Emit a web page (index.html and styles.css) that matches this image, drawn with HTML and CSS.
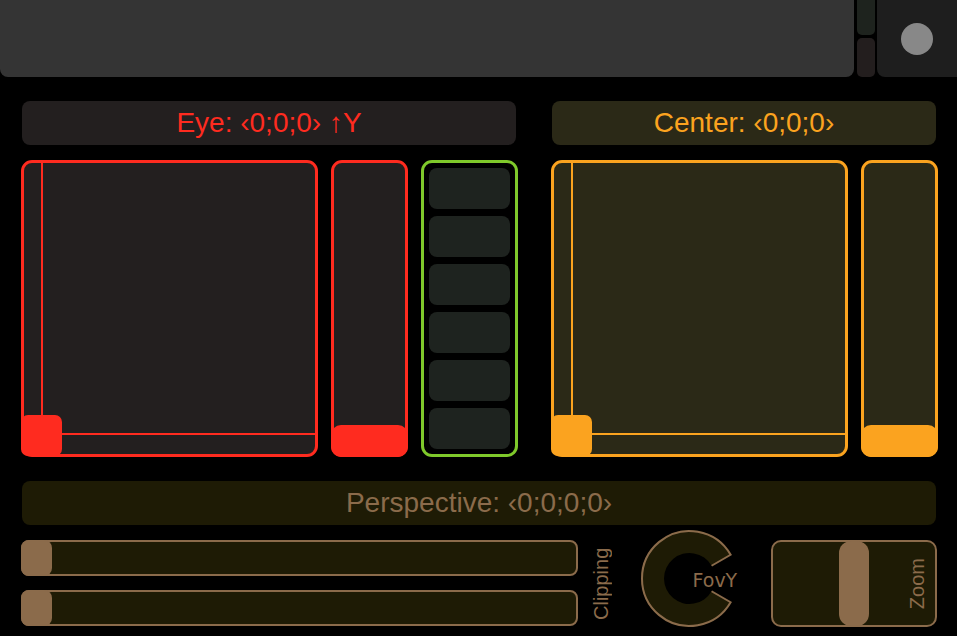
FILE: index.html
```html
<!DOCTYPE html>
<html>
<head>
<meta charset="utf-8">
<link rel="stylesheet" href="styles.css">
</head>
<body>
<div class="top">
  <div class="bar"></div>
  <div class="mini"><div class="mini-a"></div><div class="mini-b"></div></div>
  <div class="rec"><div class="dot"></div></div>
</div>

<div class="panels">
  <section class="section">
    <div class="label eye-label">Eye: ‹0;0;0› ↑Y</div>
    <div class="row">
      <div class="pad eye-pad">
        <div class="vline"></div>
        <div class="hline"></div>
        <div class="handle"></div>
      </div>
      <div class="zs eye-zs"><div class="zhandle"></div></div>
      <div class="btns">
        <div class="btn"></div>
        <div class="btn"></div>
        <div class="btn"></div>
        <div class="btn"></div>
        <div class="btn"></div>
        <div class="btn"></div>
      </div>
    </div>
  </section>
  <section class="section">
    <div class="label center-label">Center: ‹0;0;0›</div>
    <div class="row">
      <div class="pad center-pad">
        <div class="vline"></div>
        <div class="hline"></div>
        <div class="handle"></div>
      </div>
      <div class="zs center-zs"><div class="zhandle"></div></div>
    </div>
  </section>
</div>

<div class="persp">Perspective: ‹0;0;0;0›</div>

<div class="bottom">
  <div class="sliders">
    <div class="hs"><div class="hh"></div></div>
    <div class="hs"><div class="hh"></div></div>
  </div>
  <div class="clip">Clipping</div>
  <svg class="knob" width="100" height="87" viewBox="0 0 100 87">
    <path d="M90.5 14.25 A48.5 48.5 0 1 0 90.5 62.75 L70.58 51.25 A25.5 25.5 0 1 1 70.58 25.75 Z" fill="#1e1b05"/>
    <path d="M70.58 25.75 L89.63 14.75 A47.5 47.5 0 1 0 89.63 62.25 L70.58 51.25" fill="none" stroke="#8b6b4b" stroke-width="2"/>
    <text x="51.5" y="46.7" class="fovy">FovY</text>
  </svg>
  <div class="zoom">
    <div class="zoomhandle"></div>
    <div class="zoomtext">Zoom</div>
  </div>
</div>
</body>
</html>
```

FILE: styles.css
```css
* { box-sizing: border-box; }
html, body { margin: 0; padding: 0; }
body {
  background: #000;
  font-family: "Liberation Sans", Arial, sans-serif;
  width: 957px;
  height: 636px;
  overflow: hidden;
}
.top { display: flex; height: 77px; }
.bar { width: 854px; background: #343434; border-radius: 0 0 8px 8px; }
.mini { width: 18px; margin-left: 3px; display: flex; flex-direction: column; gap: 3px; }
.mini-a { height: 35px; background: #1e231e; border-radius: 0 0 5px 5px; }
.mini-b { flex: 1; background: #231e1e; border-radius: 5px; }
.rec {
  flex: 1; margin-left: 2px; background: #1e1e1e; border-radius: 0 0 0 8px;
  display: flex; align-items: center; justify-content: center;
}
.dot { width: 32px; height: 32px; border-radius: 50%; background: #888; }

.panels { display: flex; gap: 33px; padding: 24px 0 0 21px; }
.section { display: flex; flex-direction: column; gap: 15px; }
.label {
  height: 44px; margin: 0 2px 0 1px; border-radius: 8px;
  font-size: 28px; line-height: 44px; text-align: center;
}
.eye-label { background: #231f1f; color: #ff2b1f; }
.center-label { background: #2b2917; color: #fba31f; }
.row { display: flex; gap: 13px; }

.pad {
  width: 297px; height: 297px; border: 3px solid; border-radius: 11px; position: relative;
}
.eye-pad { border-color: #ff2b1f; background: #231f1f; }
.center-pad { border-color: #fba31f; background: #2b2917; }
.vline { position: absolute; left: 17px; top: 0; bottom: 0; width: 2px; }
.hline { position: absolute; left: 0; right: 0; top: 270px; height: 2px; }
.handle { position: absolute; left: -3px; bottom: -2px; width: 41px; height: 41px; border-radius: 7px; }
.eye-pad .vline, .eye-pad .hline, .eye-pad .handle { background: #ff2b1f; }
.center-pad .vline, .center-pad .hline, .center-pad .handle { background: #fba31f; }

.zs { width: 77px; height: 297px; border: 3px solid; border-radius: 11px; position: relative; }
.eye-zs { border-color: #ff2b1f; background: #231f1f; }
.center-zs { border-color: #fba31f; background: #2b2917; }
.zhandle { position: absolute; left: -3px; right: -3px; bottom: -3px; height: 32px; border-radius: 10px; }
.eye-zs .zhandle { background: #ff2b1f; }
.center-zs .zhandle { background: #fba31f; }

.btns {
  width: 97px; height: 297px; border: 3px solid #7fc92b; border-radius: 11px;
  padding: 5px; display: flex; flex-direction: column; gap: 7px;
}
.btn { height: 41px; background: #1e231f; border-radius: 8px; }

.persp {
  margin: 24px 21px 0 22px; height: 44px; border-radius: 8px;
  background: #1e1b05; color: #8b6b4b;
  font-size: 28px; line-height: 44px; text-align: center;
}

.bottom { display: flex; margin-top: 15px; padding-left: 21px; height: 87px; }
.sliders { width: 557px; display: flex; flex-direction: column; gap: 14px; }
.hs {
  height: 36px; border: 2px solid #8b6b4b; border-radius: 8px;
  background: #1e1b05; position: relative;
}
.hh { position: absolute; left: -2px; top: -2px; bottom: -2px; width: 31px; border-radius: 8px; background: #8b6b4b; }
.clip {
  width: 20px; margin-left: 13px; writing-mode: vertical-rl; transform: rotate(180deg);
  font-size: 20px; line-height: 20px; text-align: center; color: #8b6b4b;
}
.knob { margin-left: 30px; overflow: visible; flex: none; }
.fovy { font-family: "DejaVu Sans", Verdana, sans-serif; font-size: 19px; fill: #8b6b4b; }
.zoom {
  width: 166px; height: 87px; margin-left: 30px; border: 2px solid #8b6b4b; border-radius: 10px;
  background: #1e1b05; position: relative;
  display: flex; align-items: center; justify-content: flex-end; padding-right: 8px;
}
.zoomhandle { position: absolute; left: 66px; top: -1px; bottom: -1px; width: 30px; border-radius: 12px; background: #8b6b4b; }
.zoomtext {
  writing-mode: vertical-rl; transform: rotate(180deg);
  font-size: 20px; line-height: 20px; color: #8b6b4b;
}
```
